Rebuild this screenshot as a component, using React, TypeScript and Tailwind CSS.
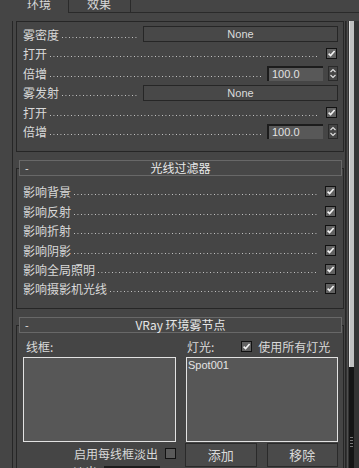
import React from "react";

function Dots() {
  return (
    <span className="ml-[3px] h-px flex-1 translate-y-[3px] bg-[linear-gradient(to_right,#cccccc_1px,transparent_1px)] bg-[length:3.5px_1px]" />
  );
}

function Check({ className = "" }: { className?: string }) {
  return (
    <span
      className={
        "flex h-[11px] w-[11px] shrink-0 items-center justify-center border border-[#121212] bg-[#626262] " +
        className
      }
    >
      <svg width="9" height="9" viewBox="0 0 9 9">
        <path d="M1.6 4.6 L3.6 6.6 L7.6 2" fill="none" stroke="#f4f4f4" strokeWidth="1.6" />
      </svg>
    </span>
  );
}

function EmptyCheck({ className = "" }: { className?: string }) {
  return (
    <span
      className={
        "block h-[11px] w-[11px] shrink-0 border border-[#121212] bg-[#5a5a5a] " + className
      }
    />
  );
}

function Row({ label, children, h = "h-[19.5px]" }: { label: string; children: React.ReactNode; h?: string }) {
  return (
    <div className={"flex items-center " + h}>
      <span className="leading-[17px] whitespace-nowrap">{label}</span>
      <Dots />
      {children}
    </div>
  );
}

function NoneButton() {
  return (
    <div className="ml-[6px] flex h-[16px] w-[195px] items-center justify-center border border-[#262626] bg-[#484848] font-['Liberation_Sans',sans-serif] text-[11px] text-[#dcdcdc]">
      None
    </div>
  );
}

function Spinner() {
  return (
    <div className="ml-[4px] flex items-center">
      <div className="h-[15px] w-[56px] border-l-2 border-t-2 border-[#1c1c1c] bg-[#585858] pl-[3px] font-['Liberation_Sans',sans-serif] text-[11px] leading-[13px] text-[#e2e2e2]">
        100.0
      </div>
      <div className="ml-[5px] flex h-[15px] w-[10px] items-center justify-center border border-[#2a2a2a]">
        <svg width="8" height="13" viewBox="0 0 8 13">
          <path d="M1.5 5 L4 2.5 L6.5 5" fill="none" stroke="#dedede" strokeWidth="1.2" />
          <path d="M1.5 8 L4 10.5 L6.5 8" fill="none" stroke="#dedede" strokeWidth="1.2" />
        </svg>
      </div>
    </div>
  );
}

function Header({ title }: { title: string }) {
  return (
    <div className="-mt-[9px] ml-[2px] mr-[1px] grid h-[16px] grid-cols-[1fr_auto_1fr] items-center border border-[#686868] bg-[#474747]">
      <span className="pl-[5px] font-['Liberation_Sans',sans-serif] text-[11px] leading-[12px]">-</span>
      <span className="leading-[14px] text-[#e8e8e8] whitespace-nowrap">{title}</span>
      <span />
    </div>
  );
}

export default function App() {
  const filters = ["影响背景", "影响反射", "影响折射", "影响阴影", "影响全局照明", "影响摄影机光线"];
  return (
    <div className="relative h-[468px] w-[359px] overflow-hidden bg-[#454545] font-['Noto_Sans_CJK_SC','Noto_Sans_CJK_JP',sans-serif] text-[12px] text-[#d9d9d9]">
      {/* tabs */}
      <div className="flex h-[13px] overflow-hidden">
        <div className="w-[69px] border-r border-[#2a2a2a] pl-[27px]">
          <span className="-mt-[5px] block leading-[17px]">环境</span>
        </div>
        <div className="w-[62px] border-b border-r border-[#2a2a2a] pl-[18px]">
          <span className="-mt-[5px] block leading-[17px]">效果</span>
        </div>
        <div className="flex-1 border-b border-[#2a2a2a]" />
      </div>
      <div className="h-[8px]" />

      <div className="flex h-[447px]">
        <div className="w-[12px]" />
        {/* main rollout column */}
        <div className="h-full w-[334px] overflow-hidden border-x border-[#262626] pl-[3px] pr-[1px]">
          {/* rollout 1 */}
          <div className="h-[131px] border border-[#262626] pl-[6px] pr-[5px] pt-[2.5px]">
            <Row label="雾密度">
              <NoneButton />
            </Row>
            <Row label="打开">
              <Check className="ml-[8px] mr-[1px]" />
            </Row>
            <Row label="倍增">
              <Spinner />
            </Row>
            <Row label="雾发射">
              <NoneButton />
            </Row>
            <Row label="打开">
              <Check className="ml-[8px] mr-[1px]" />
            </Row>
            <Row label="倍增">
              <Spinner />
            </Row>
          </div>

          {/* rollout 2 */}
          <div className="mt-[16px] border border-[#262626] pb-[9px]">
            <Header title="光线过滤器" />
            <div className="pl-[6px] pr-[6px] pt-[6.3px]">
              {filters.map((f) => (
                <Row key={f} label={f} h="h-[19.4px]">
                  <Check className="ml-[7px] mr-[1px]" />
                </Row>
              ))}
            </div>
          </div>

          {/* rollout 3 */}
          <div className="mt-[16px] border border-[#262626] pb-[20px]">
            <Header title="VRay 环境雾节点" />
            <div className="flex gap-[10px] pl-[6px] pr-[5px] pt-[6px]">
              {/* left column */}
              <div className="w-[153px]">
                <div className="flex h-[16px] items-center pl-[3px] leading-[16px]">线框:</div>
                <div className="mt-[2px] h-[85px] border border-[#e2e2e2] bg-[#575757]" />
                <div className="mt-[4px] flex h-[16px] items-center justify-end">
                  <span className="leading-[16px]">启用每线框淡出</span>
                  <EmptyCheck className="ml-[7px]" />
                </div>
                <div className="mt-[2px] flex h-[16px] items-start pl-[50px]">
                  <span className="leading-[16px]">淡出</span>
                  <div className="ml-[7px] mt-[2px] h-[14px] w-[56px] border-l-2 border-t-2 border-[#1c1c1c] bg-[#585858]" />
                </div>
              </div>
              {/* right column */}
              <div className="w-[152px]">
                <div className="flex h-[16px] items-center pl-[1px]">
                  <span className="leading-[16px]">灯光:</span>
                  <Check className="ml-[27px]" />
                  <span className="ml-[6px] leading-[16px]">使用所有灯光</span>
                </div>
                <div className="mt-[2px] h-[85px] border border-[#e2e2e2] bg-[#575757] pl-[1px] pt-[1px] font-['Liberation_Sans',sans-serif] text-[11px] leading-[13px] text-[#e4e4e4]">
                  Spot001
                </div>
                <div className="-ml-[1px] mt-[1px] grid grid-cols-2 gap-[10px]">
                  <div className="flex h-[24px] items-center justify-center border border-[#2a2a2a] bg-[#4a4a4a] text-[13px]">
                    添加
                  </div>
                  <div className="flex h-[24px] items-center justify-center border border-[#2a2a2a] bg-[#4a4a4a] text-[13px]">
                    移除
                  </div>
                </div>
              </div>
            </div>
          </div>
        </div>

        {/* scrollbar */}
        <div className="flex h-full w-[13px] bg-[#333333]">
          <div className="ml-[1px] w-[1px] bg-[#505050]" />
          <div className="ml-[1px] flex w-[5px] flex-col">
            <div className="h-[346px] border-l border-[#e0e0e0] bg-[#c0c0c0]" />
            <div className="flex flex-1 flex-col items-center bg-[#151515] pt-[70px]">
              <div className="h-px w-[3px] bg-[#777]" />
              <div className="mt-[2px] h-px w-[3px] bg-[#777]" />
              <div className="mt-[2px] h-px w-[3px] bg-[#777]" />
              <div className="mt-[2px] h-px w-[3px] bg-[#777]" />
            </div>
          </div>
        </div>
      </div>
    </div>
  );
}
